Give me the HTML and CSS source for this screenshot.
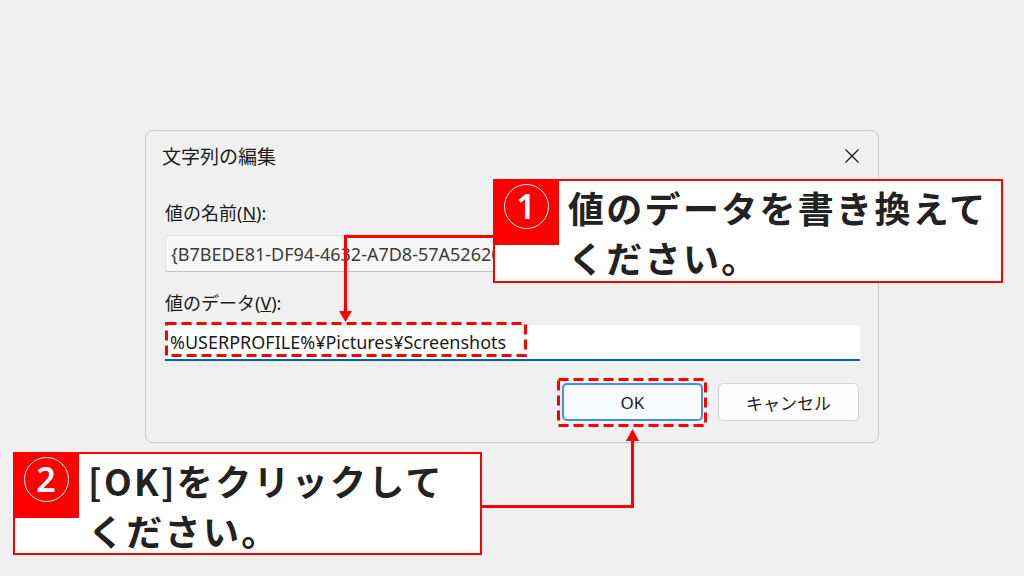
FILE: index.html
```html
<!DOCTYPE html>
<html>
<head>
	<title>文字列の編集</title>
	<meta charset="UTF-8">
	<link rel="stylesheet" href="styles.css">
</head>
<body>

<div id="stage">

	<div id="dialog">
		<div class="titlebar">
			<div class="title">文字列の編集</div>
			<div class="close">
				<svg width="16" height="16" viewBox="0 0 16 16"><path d="M1.5 1.5 L14.5 14.5 M14.5 1.5 L1.5 14.5" stroke="#1b1b1b" stroke-width="1.4" fill="none"/></svg>
			</div>
		</div>

		<div class="body">
			<div class="label">値の名前(<u>N</u>):</div>
			<div class="field readonly">{B7BEDE81-DF94-4632-A7D8-57A52620B86F}</div>

			<div class="label second">値のデータ(<u>V</u>):</div>
			<div class="field editable">%USERPROFILE%¥Pictures¥Screenshots</div>

			<div class="buttons">
				<div class="btn default">OK</div>
				<div class="btn">キャンセル</div>
			</div>
		</div>
	</div>

	<!-- anotaciones -->
	<div class="callout one">
		<div class="badge"><span class="num">1</span></div>
		<div class="note">値のデータを書き換えて<br>ください。</div>
	</div>

	<div class="callout two">
		<div class="badge"><span class="num">2</span></div>
		<div class="note">[OK]をクリックして<br>ください。</div>
	</div>

	<svg class="marks" width="1024" height="576" viewBox="0 0 1024 576">
		<rect x="166.5" y="323.5" width="359" height="32" fill="none" stroke="#ff0000" stroke-width="3" stroke-dasharray="10 5"/>
		<rect x="558.5" y="379.5" width="147" height="46" fill="none" stroke="#ff0000" stroke-width="3" stroke-dasharray="10 5"/>

		<path d="M493 236.5 H345.5 V313" fill="none" stroke="#ff0000" stroke-width="3"/>
		<polygon points="339,311 352,311 345.5,322" fill="#ff0000"/>

		<path d="M481 506.5 H632.5 V439" fill="none" stroke="#ff0000" stroke-width="3"/>
		<polygon points="626,441 639,441 632.5,429" fill="#ff0000"/>
	</svg>

</div>

</body>
</html>
```

FILE: styles.css
```css
* {
	box-sizing: border-box;
}
body {
	margin: 0;
	padding: 0;
	background-color: #f0f0f0;
	font-family: "Noto Sans", "Noto Sans CJK JP", sans-serif;
}
#stage {
	position: relative;
	width: 1024px;
	height: 576px;
	padding: 130px 0 0 145px;
	overflow: hidden;
}

#dialog {
	width: 734px;
	height: 313px;
	background-color: #f0f0f0;
	border: 1px solid #cacaca;
	border-radius: 8px;
	color: #1b1b1b;
}
.titlebar {
	height: 49px;
	display: flex;
	align-items: center;
	justify-content: space-between;
	padding: 0 18px 0 16px;
}
.title {
	font-size: 19px;
}
.close {
	display: flex;
	align-items: center;
}

.body {
	padding: 21px 18px 0 19px;
}
.label {
	font-size: 18px;
	line-height: 24px;
}
.label.second {
	margin-top: 19px;
}
.field {
	margin-top: 10px;
	font-size: 18px;
	display: flex;
	align-items: center;
	padding: 0 5px;
}
.field.readonly {
	height: 37px;
	background-color: #f7f7f7;
	border: 1px solid #e3e3e3;
	border-bottom-color: #c4c4c4;
	border-radius: 3px;
	color: #3c3c3c;
}
.field.editable {
	height: 36px;
	background-color: #ffffff;
	border-bottom: 2px solid #0063b8;
	border-radius: 3px 3px 0 0;
}

.buttons {
	margin-top: 22px;
	display: flex;
	justify-content: flex-end;
	gap: 15px;
	padding-right: 1px;
}
.btn {
	width: 141px;
	height: 38px;
	display: flex;
	align-items: center;
	justify-content: center;
	font-size: 17px;
	background-color: #fdfdfd;
	border: 1px solid #d2d2d2;
	border-radius: 5px;
}
.btn.default {
	border: 2px solid #4a8fd6;
	background-color: #f8fbfe;
}

/* cuadros de texto rojos */
.callout {
	position: absolute;
	display: flex;
	align-items: flex-start;
	background-color: #ffffff;
	border: 2px solid #ff0000;
	z-index: 2;
}
.callout.one {
	left: 493px;
	top: 179px;
	width: 510px;
	height: 104px;
}
.callout.two {
	left: 13px;
	top: 452px;
	width: 469px;
	height: 103px;
}
.badge {
	flex: none;
	width: 66px;
	height: 66px;
	margin: -2px 0 0 -2px;
	background-color: #ff0000;
	display: flex;
	justify-content: center;
	padding-top: 5px;
}
.num {
	width: 45px;
	height: 45px;
	border: 1.5px solid #ffffff;
	border-radius: 50%;
	color: #ffffff;
	font-family: "Noto Sans", sans-serif;
	font-weight: 600;
	font-size: 34px;
	line-height: 42px;
	text-align: center;
}
.note {
	padding: 1px 0 0 9px;
	font-family: "Noto Sans CJK JP", sans-serif;
	font-weight: 700;
	font-size: 36px;
	line-height: 50px;
	letter-spacing: 2.3px;
	color: #222222;
	white-space: nowrap;
}

.marks {
	position: absolute;
	left: 0;
	top: 0;
	z-index: 3;
	pointer-events: none;
}
```
